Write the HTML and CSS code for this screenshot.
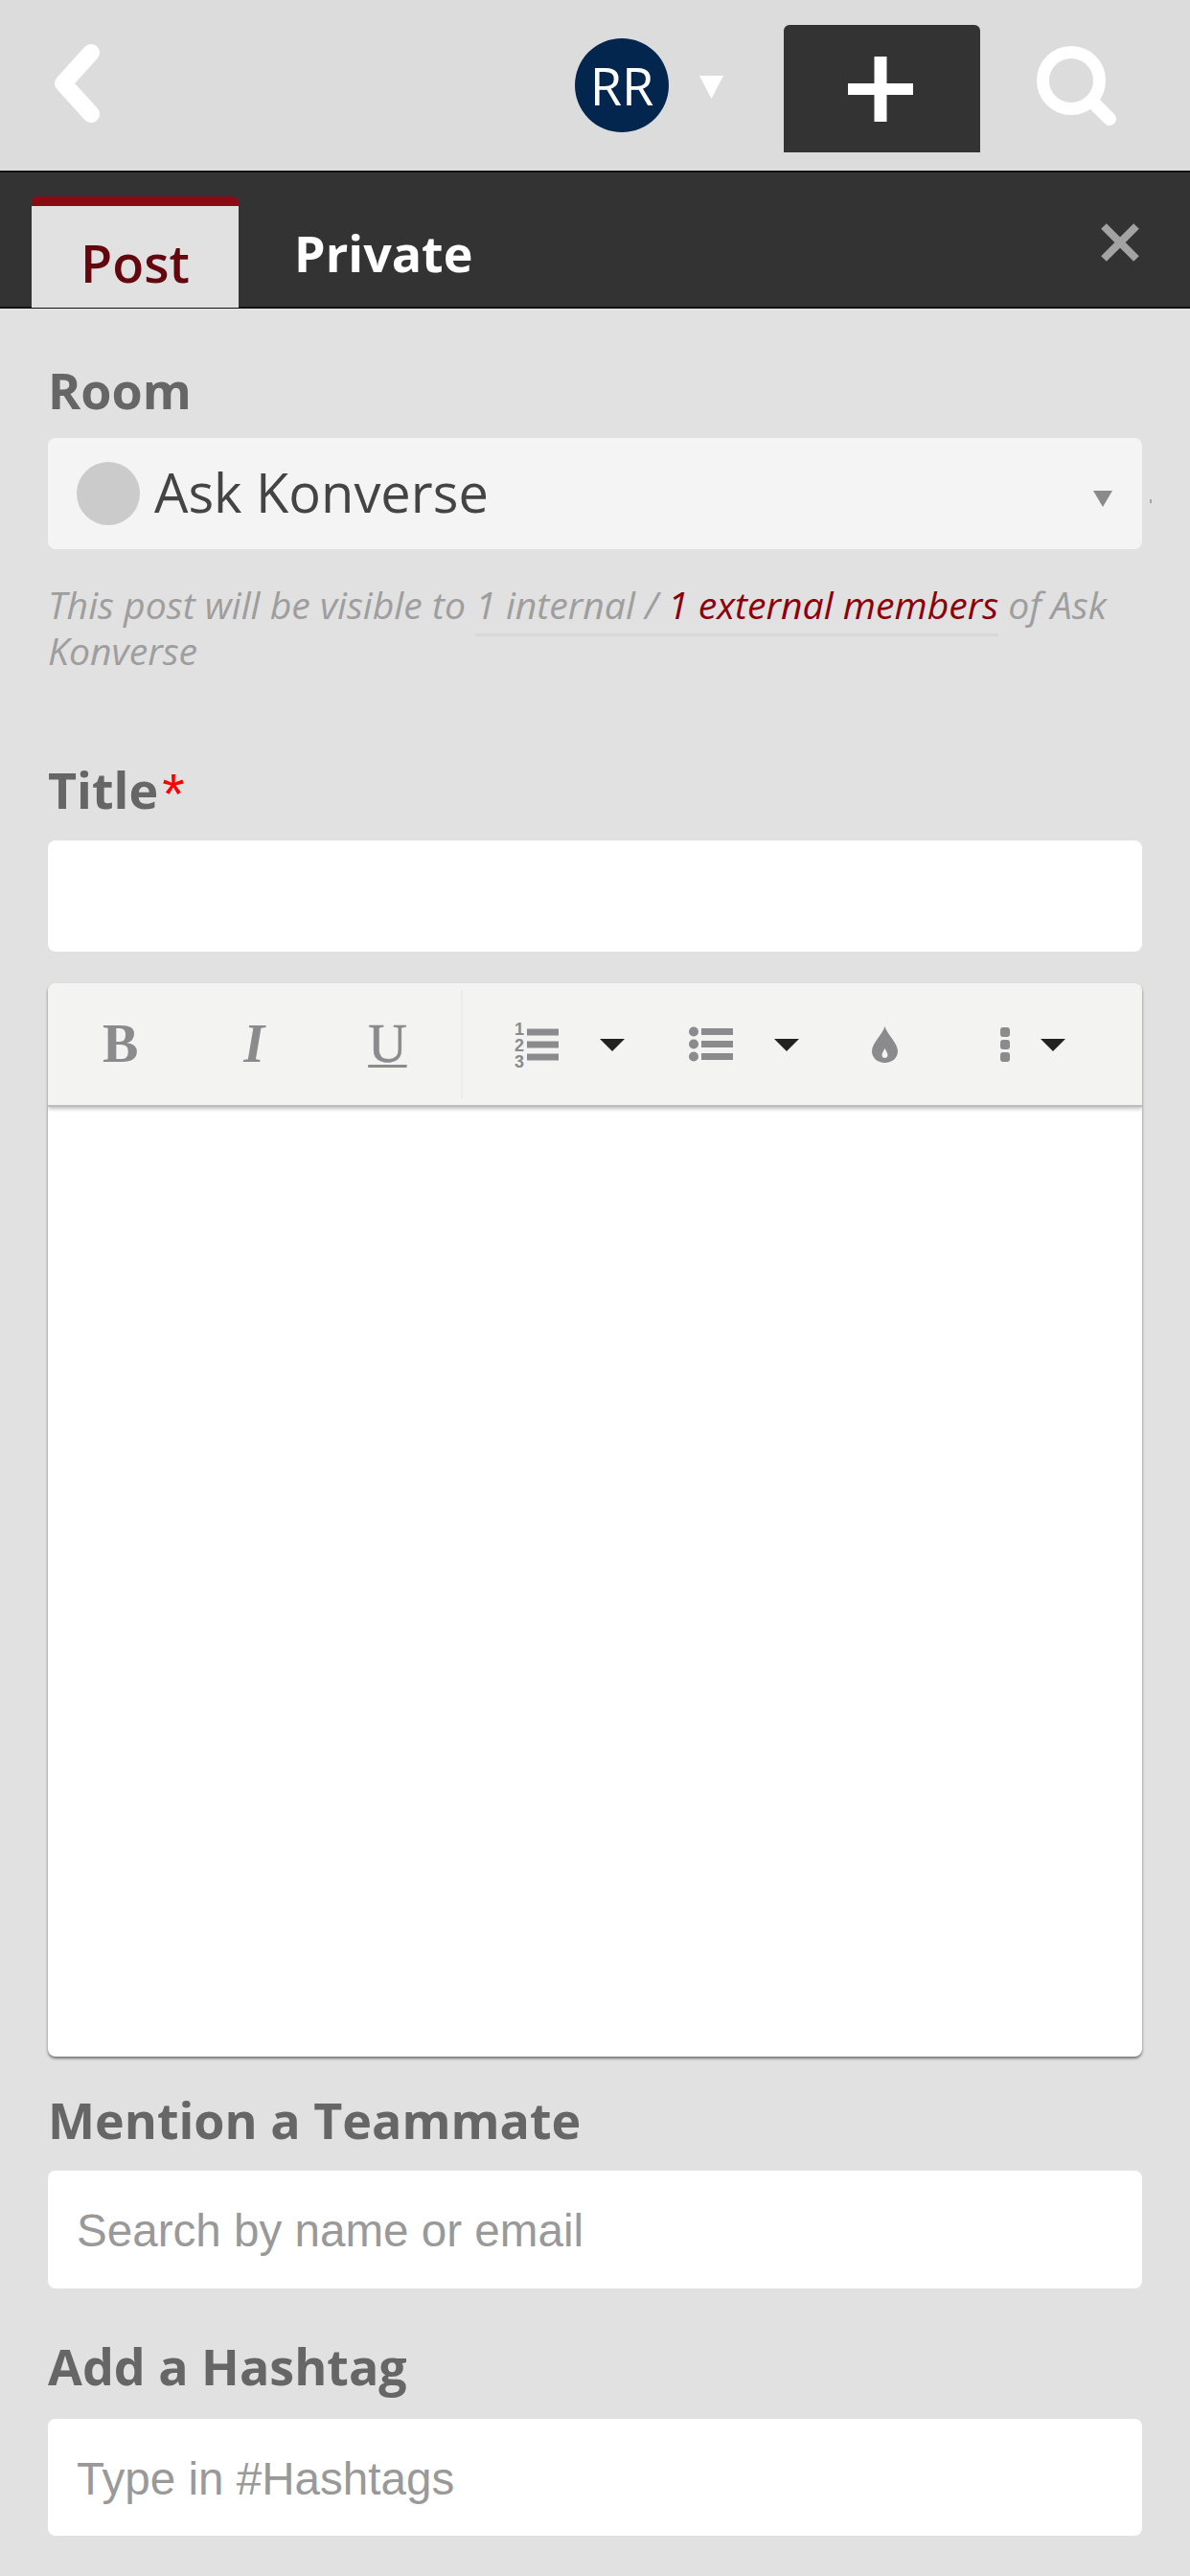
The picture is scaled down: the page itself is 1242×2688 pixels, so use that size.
FILE: index.html
```html
<!DOCTYPE HTML>
<html lang="en">
  <head>
    <title>New Post</title>
    <meta charset="utf-8">
    <link rel="stylesheet" href="styles.css">
  </head>
  <body>

  <div class="topbar">
    <svg class="back" width="52" height="82" viewBox="0 0 52 82"><path d="M41 9 L12 41 L41 73" fill="none" stroke="#fff" stroke-width="18" stroke-linecap="round" stroke-linejoin="round"/></svg>
    <div class="avatar">RR</div>
    <svg class="avatar-arrow" width="25" height="24" viewBox="0 0 25 24"><path d="M0 0 H25 L12.500 24 Z" fill="#fff"/></svg>
    <div class="add">
      <svg width="68" height="68" viewBox="0 0 68 68"><path d="M27.500 0 H40.500 V28 H68 V40 H40.500 V68 H27.500 V40 H0 V28 H27.500 Z" fill="#fff"/></svg>
    </div>
    <svg class="search" width="84" height="84" viewBox="0 0 84 84"><circle cx="36" cy="36" r="29.500" fill="none" stroke="#fff" stroke-width="13"/><path d="M58 58 L76 76" stroke="#fff" stroke-width="14" stroke-linecap="round"/></svg>
  </div>

  <div class="tabbar">
    <div class="tab active">Post</div>
    <div class="tab">Private</div>
    <svg class="close" width="42" height="42" viewBox="0 0 42 42"><path d="M4 4 L38 38 M38 4 L4 38" stroke="#a3a3a3" stroke-width="8"/></svg>
  </div>

  <div class="form">
    <div class="label label-room">Room</div>
    <div class="select">
      <span class="room-dot"></span>
      <span class="room-name">Ask Konverse</span>
      <svg class="select-arrow" width="20" height="17" viewBox="0 0 20 17"><path d="M0 0 H20 L10 17 Z" fill="#8a8a8a"/></svg>
    </div>
    <p class="hint">This post will be visible to <span class="members">1 internal / <b>1 external members</b></span> of Ask<br>Konverse</p>

    <div class="label label-title">Title<span class="req">*</span></div>
    <div class="field field-title"></div>

    <div class="editor">
      <div class="toolbar">
        <div class="tool-group">
          <span class="fmt fmt-b">B</span>
          <span class="fmt fmt-i">I</span>
          <span class="fmt fmt-u">U</span>
        </div>
        <div class="tool-group tool-lists">
          <svg class="ic-ol" width="46" height="54" viewBox="0 0 46 54">
            <text x="0" y="16.500" class="num">1</text><text x="0" y="33.500" class="num">2</text><text x="0" y="50.500" class="num">3</text>
            <rect x="13" y="10.500" width="33" height="7"/><rect x="13" y="23.500" width="33" height="7"/><rect x="13" y="36.500" width="33" height="7"/>
          </svg>
          <span class="caret caret-ol"></span>
          <svg class="ic-ul" width="46" height="48" viewBox="0 0 46 48">
            <circle cx="5" cy="10.500" r="5"/><circle cx="5" cy="23.500" r="5"/><circle cx="5" cy="36.500" r="5"/>
            <rect x="13" y="7" width="33" height="7"/><rect x="13" y="20" width="33" height="7"/><rect x="13" y="33" width="33" height="7"/>
          </svg>
          <span class="caret caret-ul"></span>
          <svg class="ic-drop" width="27" height="38" viewBox="0 0 27 38">
            <path fill-rule="evenodd" d="M13.500 0 C16 9 27 17 27 26 C27 33 21 38 13.500 38 C6 38 0 33 0 26 C0 17 11 9 13.500 0 Z M13.500 23 C12 26 10.500 28 10.500 30 C10.500 32 12 33 13.500 33 C15 33 16.500 32 16.500 30 C16.500 28 15 26 13.500 23 Z"/>
          </svg>
          <svg class="ic-more" width="10" height="36" viewBox="0 0 10 36">
            <rect x="0" y="0" width="10" height="10" rx="3"/><rect x="0" y="13" width="10" height="10" rx="3"/><rect x="0" y="26" width="10" height="10" rx="3"/>
          </svg>
          <span class="caret caret-more"></span>
        </div>
      </div>
      <div class="editor-body"></div>
    </div>

    <div class="label label-mention">Mention a Teammate</div>
    <div class="field field-mention"><span class="placeholder">Search by name or email</span></div>

    <div class="label label-hashtag">Add a Hashtag</div>
    <div class="field field-hashtag"><span class="placeholder">Type in #Hashtags</span></div>
  </div>

  </body>
</html>
```

FILE: styles.css
```css
html {
  height: 100%;
}
body {
  margin: 0;
  padding: 0;
  height: 2688px;
  overflow: hidden;
  background: #e1e1e1;
  font-family: "Open Sans", sans-serif;
}

.topbar {
  display: flex;
  height: 178px;
  background: #dcdcdc;
  box-sizing: border-box;
}
.back {
  margin: 46px 0 0 54px;
}
.avatar {
  width: 98px;
  height: 98px;
  margin: 40px 0 0 494px;
  border-radius: 50%;
  background: #03264f;
  color: #fff;
  font-size: 54px;
  line-height: 98px;
  text-align: center;
}
.avatar-arrow {
  margin: 79px 0 0 32px;
}
.add {
  display: flex;
  align-items: center;
  justify-content: center;
  width: 205px;
  height: 133px;
  margin: 26px 0 0 63px;
  padding-right: 4px;
  background: #333;
  border-radius: 6px 6px 0 0;
  box-sizing: border-box;
}
.search {
  margin: 48px 0 0 59px;
}

.tabbar {
  display: flex;
  height: 144px;
  background: #333;
  border-top: 2px solid #111;
  border-bottom: 2px solid #111;
  box-sizing: border-box;
  padding-left: 33px;
}
.tab {
  padding: 50px 0 0 58px;
  color: #fff;
  font-size: 52px;
  font-weight: 700;
  line-height: 68px;
}
.tab.active {
  width: 216px;
  height: 116px;
  margin-top: 25px;
  padding: 26px 0 0;
  box-sizing: border-box;
  background: #e1e1e1;
  border-top: 10px solid #8c0a14;
  border-radius: 6px 6px 0 0;
  color: #63060e;
  text-align: center;
  line-height: 66px;
  font-weight: 600;
  font-size: 54px;
}
.close {
  margin: 52px 52px 0 auto;
}

.form {
  padding: 0 50px;
}
.label {
  color: #666;
  font-size: 52px;
  font-weight: 700;
  line-height: 68px;
}
.label-room {
  padding-top: 51px;
}
.label-title {
  margin-top: 87px;
}
.label-mention {
  margin-top: 32px;
}
.label-hashtag {
  margin-top: 47px;
}
.req {
  margin-left: 4px;
  color: #f00;
  font-family: "Liberation Sans", sans-serif;
  font-size: 60px;
  font-weight: 400;
  line-height: 0;
  vertical-align: -5px;
}

.select {
  display: flex;
  align-items: center;
  position: relative;
  height: 116px;
  margin-top: 16px;
  padding: 0 30px;
  background: #f4f4f4;
  border-radius: 8px;
}
.select::after {
  content: "";
  position: absolute;
  right: -10px;
  top: 64px;
  width: 2px;
  height: 4px;
  background: #a5a5a5;
}
.room-dot {
  width: 66px;
  height: 66px;
  border-radius: 50%;
  background: #cbcbcb;
}
.room-name {
  margin: 0 0 4px 15px;
  color: #444;
  font-size: 56px;
}
.select-arrow {
  margin: 10px 1px 0 auto;
}

.hint {
  margin: 34px 0 0;
  color: #9e9e9e;
  font-size: 39.200px;
  font-style: italic;
  line-height: 48px;
}
.members {
  border-bottom: 3px solid #d8d8d8;
  padding-bottom: 4px;
}
.members b {
  color: #8c0008;
  font-weight: 400;
}

.field {
  background: #fff;
  border-radius: 8px;
  margin-top: 19px;
  height: 116px;
}
.field-mention,
.field-hashtag {
  display: flex;
  align-items: center;
  height: 123px;
  padding: 2px 0 0 30px;
  box-sizing: border-box;
}
.field-hashtag {
  height: 122px;
  margin-top: 21px;
}
.placeholder {
  color: #999;
  font-family: "Liberation Sans", sans-serif;
  font-size: 47.600px;
}

.editor {
  margin-top: 33px;
  height: 1120px;
  display: flex;
  flex-direction: column;
  border-radius: 8px;
  background: #fff;
  box-shadow: 0 2px 3px rgba(0,0,0,0.5);
  overflow: hidden;
}
.toolbar {
  display: flex;
  flex: none;
  height: 129px;
  background: #f3f3f1;
  border-bottom: 2px solid #bdbdbd;
  box-shadow: 0 2px 4px rgba(0,0,0,0.25);
  box-sizing: border-box;
  position: relative;
}
.tool-group {
  display: flex;
  align-items: center;
  height: 113px;
  margin-top: 7px;
}
.tool-group:first-child {
  width: 431px;
  border-right: 2px solid #ebebe9;
}
.tool-group svg {
  fill: #8b8b8e;
  flex: none;
}
.fmt {
  color: #8b8b8e;
  font-family: "Liberation Serif", serif;
  font-size: 56px;
  line-height: 56px;
  margin-bottom: 2px;
}
.fmt-b {
  margin-left: 57px;
  font-weight: 700;
}
.fmt-i {
  margin-left: 110px;
  font-weight: 700;
  font-style: italic;
}
.fmt-u {
  margin-left: 108px;
  -webkit-text-stroke: 0.6px #8b8b8e;
  text-decoration: underline;
  text-decoration-thickness: 3px;
  text-underline-offset: 3px;
}
.num {
  font-family: "Liberation Sans", sans-serif;
  font-size: 18px;
  font-weight: 700;
}
.ic-ol {
  margin-left: 54px;
}
.caret {
  flex: none;
  width: 0;
  height: 0;
  border-left: 13px solid transparent;
  border-right: 13px solid transparent;
  border-top: 13px solid #222;
  margin-top: 2px;
}
.caret-ol {
  margin-left: 43px;
}
.ic-ul {
  margin-left: 67px;
}
.caret-ul {
  margin-left: 43px;
}
.ic-drop {
  margin-left: 76px;
}
.ic-more {
  margin-left: 107px;
}
.caret-more {
  margin-left: 32px;
}
.editor-body {
  flex: 1;
}
```
